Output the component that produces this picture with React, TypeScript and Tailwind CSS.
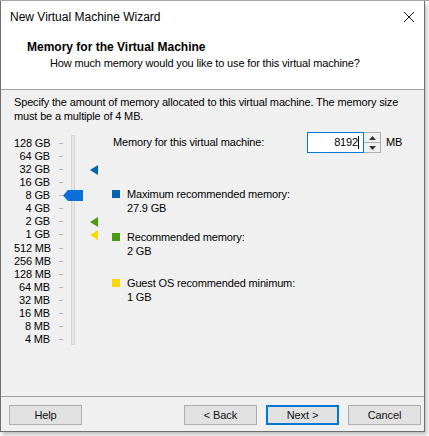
import React from 'react';

const sizes = [
  '128 GB', '64 GB', '32 GB', '16 GB', '8 GB', '4 GB', '2 GB', '1 GB',
  '512 MB', '256 MB', '128 MB', '64 MB', '32 MB', '16 MB', '8 MB', '4 MB',
];

function Marker({ color }: { color: string }) {
  return (
    <svg width="8" height="10" viewBox="0 0 8 10">
      <polygon points="8,0 8,10 0,5" fill={color} />
    </svg>
  );
}

function Legend({ color, label, value, className }: { color: string; label: string; value: string; className?: string }) {
  return (
    <div className={`flex gap-[7px] ${className ?? ''}`}>
      <div className={`w-[8px] h-[8px] mt-[3px] ${color}`} />
      <div className="leading-[14px]">
        <div>{label}</div>
        <div>{value}</div>
      </div>
    </div>
  );
}

function Button({ children, primary }: { children: React.ReactNode; primary?: boolean }) {
  return (
    <button
      className={`w-[73px] h-[20px] bg-[#e1e1e1] text-[11px] tracking-[-0.1px] text-[#111] leading-none ${
        primary ? 'border-2 border-[#0078d7]' : 'border border-[#adadad]'
      }`}
    >
      {children}
    </button>
  );
}

export default function App() {
  return (
    <div className="w-[429px] h-[436px] bg-white font-['Liberation_Sans',Arial,sans-serif] text-[11px] tracking-[-0.15px] text-black overflow-hidden">
      <div className="h-[1px] bg-[#a8a8a8] w-full" />
      <div className="w-[425px] h-[431px] border border-[#6e6e6e] border-t-0 flex flex-col shadow-[2px_3px_4px_rgba(0,0,0,0.25)]">
        {/* Title bar */}
        <div className="h-[31px] bg-white flex items-center justify-between pl-[9px] pr-[7px]">
          <span className="text-[12px] tracking-normal">New Virtual Machine Wizard</span>
          <svg width="12" height="12" viewBox="0 0 12 12" className="mr-[2px]">
            <path d="M1 1 L11 11 M11 1 L1 11" stroke="#111" strokeWidth="1" />
          </svg>
        </div>

        {/* Header */}
        <div className="h-[58px] bg-white border-b border-[#a0a0a0] pl-[26px] pt-[7px] leading-[16px]">
          <div className="font-bold text-[12px] tracking-normal">Memory for the Virtual Machine</div>
          <div className="pl-[23px]">How much memory would you like to use for this virtual machine?</div>
        </div>

        {/* Body */}
        <div className="flex-1 bg-[#f0f0f0] px-[13px] pt-[5px] flex flex-col">
          <p className="leading-[14px]">
            Specify the amount of memory allocated to this virtual machine. The memory size must be a multiple of 4 MB.
          </p>

          <div className="flex mt-[14px]">
            {/* Slider */}
            <div className="relative w-[99px]">
              <div className="flex flex-col">
                {sizes.map((s) => (
                  <div key={s} className="flex items-center h-[13.07px]">
                    <span className="w-[36px] text-right leading-[13px] whitespace-nowrap">{s}</span>
                    <span className="ml-[9px] w-[4px] h-px bg-[#b4b4b4]" />
                  </div>
                ))}
              </div>
              <div className="absolute left-[57px] top-[-2px] w-[4px] h-[210px] bg-[#e7e7e7] border border-[#d6d6d6]" />
              <svg className="absolute left-[49px] top-[53px]" width="20" height="11" viewBox="0 0 20 11">
                <polygon points="0,5.5 5,0 20,0 20,11 5,11" fill="#0a6fd6" />
              </svg>
              <div className="absolute left-[76px] top-[28px]"><Marker color="#0063b1" /></div>
              <div className="absolute left-[76px] top-[80px]"><Marker color="#4b9a16" /></div>
              <div className="absolute left-[76px] top-[93px]"><Marker color="#f9d700" /></div>
            </div>

            {/* Right side */}
            <div className="flex-1 flex flex-col">
              <div className="flex items-center h-[21px] mt-[-5px]">
                <span className="w-[194px]">Memory for this virtual machine:</span>
                <div className="w-[57px] h-[21px] border border-[#0078d7] bg-white flex items-center justify-end pr-[4px]">
                  <span>8192</span>
                  <span className="w-px h-[13px] bg-black" />
                </div>
                <div className="w-[17px] h-[21px] border border-[#adadad] border-l-0 flex flex-col bg-[#f0f0f0]">
                  <div className="flex-1 flex items-center justify-center border-b border-[#adadad]">
                    <svg width="7" height="4" viewBox="0 0 7 4"><polygon points="3.5,0 7,4 0,4" fill="#333" /></svg>
                  </div>
                  <div className="flex-1 flex items-center justify-center">
                    <svg width="7" height="4" viewBox="0 0 7 4"><polygon points="0,0 7,0 3.5,4" fill="#333" /></svg>
                  </div>
                </div>
                <span className="ml-[5px]">MB</span>
              </div>

              <div className="flex flex-col mt-[34px] ml-[-1px]">
                <Legend color="bg-[#0063b1]" label="Maximum recommended memory:" value="27.9 GB" />
                <Legend className="mt-[15px]" color="bg-[#4b9a16]" label="Recommended memory:" value="2 GB" />
                <Legend className="mt-[18px]" color="bg-[#f9d700]" label="Guest OS recommended minimum:" value="1 GB" />
              </div>
            </div>
          </div>
        </div>

        {/* Footer */}
        <div className="h-[35px] bg-[#f0f0f0] border-t border-[#a0a0a0] flex items-start pt-[8px] pl-[8px] pr-[3px]">
          <Button>Help</Button>
          <div className="flex-1" />
          <div className="flex gap-[9px]">
            <Button>&lt; Back</Button>
            <Button primary>Next &gt;</Button>
            <Button>Cancel</Button>
          </div>
        </div>
      </div>
    </div>
  );
}
